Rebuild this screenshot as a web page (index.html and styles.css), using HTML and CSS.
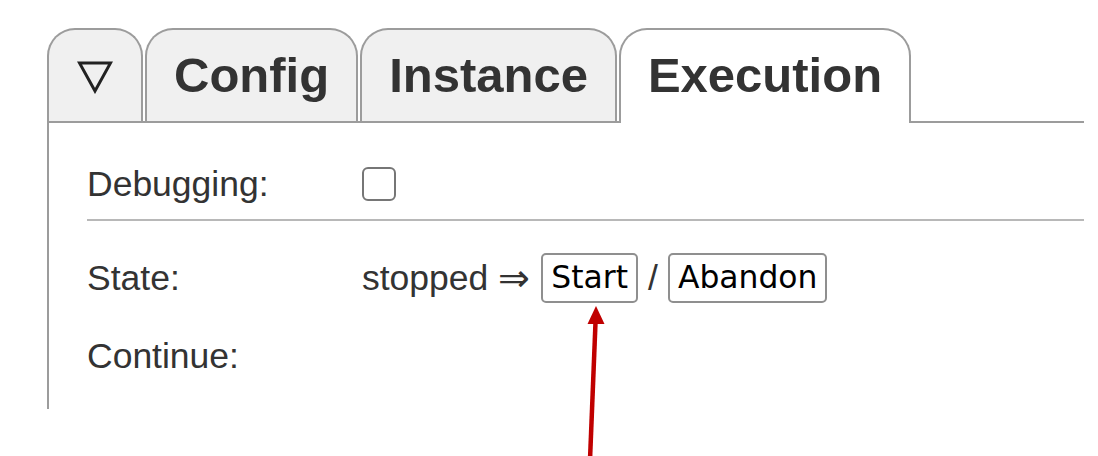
FILE: index.html
```html
<!DOCTYPE html>
<html>
<head>
<meta charset="utf-8">
<link rel="stylesheet" href="styles.css">
</head>
<body>
<div class="page">
  <div class="tabs">
    <div class="tab tab-menu">
      <svg class="tri" width="36" height="34" viewBox="0 0 36 34"><polygon points="2.5,3 33.5,3 18,31" fill="none" stroke="#222" stroke-width="3" stroke-linejoin="miter"/></svg>
    </div>
    <div class="tab">Config</div>
    <div class="tab">Instance</div>
    <div class="tab active">Execution</div>
  </div>
  <div class="panel">
    <div class="row row-debug">
      <div class="label">Debugging:</div>
      <div class="value"><input type="checkbox" class="check"></div>
    </div>
    <div class="sep"></div>
    <div class="row row-state">
      <div class="label">State:</div>
      <div class="value"><span>stopped</span><span class="implies">⇒</span><button class="btn">Start</button><span class="slash">/</span><button class="btn">Abandon</button></div>
    </div>
    <div class="row row-cont">
      <div class="label">Continue:</div>
      <div class="value"></div>
    </div>
  </div>
  <svg class="arrow" width="40" height="160" viewBox="0 0 40 160">
    <line x1="15.6" y1="20" x2="10" y2="160" stroke="#c00000" stroke-width="4.5"/>
    <polygon points="16,6 7.5,24 24.5,24" fill="#c00000"/>
  </svg>
</div>
</body>
</html>
```
FILE: styles.css
```css
html, body {
  margin: 0;
  padding: 0;
  background: #fff;
}
.page {
  position: relative;
  width: 1098px;
  height: 456px;
  padding: 28px 0 0 47px;
  box-sizing: border-box;
  font-family: "Liberation Sans", Arial, sans-serif;
  color: #333;
}
.tabs {
  display: flex;
  align-items: flex-start;
  gap: 2px;
  height: 93px;
  position: relative;
  z-index: 1;
}
.tab {
  box-sizing: border-box;
  height: 93px;
  border: 2px solid #9c9c9c;
  border-bottom: 0;
  border-radius: 28px 28px 0 0;
  background: #f0f0f0;
  display: flex;
  align-items: center;
  justify-content: center;
  padding: 0 27px 2px;
  font-weight: bold;
  font-size: 49px;
  color: #333;
}
.tab-menu {
  width: 96px;
  padding: 0;
}
.tri {
  display: block;
  margin-top: 2px;
}
.tab.active {
  background: #fff;
  height: 95px;
  padding-bottom: 4px;
}
.panel {
  box-sizing: border-box;
  width: 1037px;
  height: 288px;
  border-top: 2px solid #9c9c9c;
  border-left: 2px solid #9c9c9c;
  padding: 40px 0 0 38px;
  font-size: 35.5px;
}
.row {
  display: flex;
  align-items: center;
}
.label {
  width: 275px;
  flex: none;
}
.value {
  display: flex;
  align-items: center;
}
.row-debug {
  height: 42px;
}
.check {
  appearance: none;
  -webkit-appearance: none;
  margin: 0;
  width: 34px;
  height: 34px;
  box-sizing: border-box;
  border: 2px solid #767676;
  border-radius: 6px;
  background: #fff;
}
.sep {
  height: 2px;
  background: #b8b8b8;
  margin-top: 14px;
}
.row-state {
  margin-top: 32px;
  height: 50px;
}
.implies {
  font-size: 38px;
  margin: 0 11px 0 10px;
}
.slash {
  margin: 0 10px;
}
.btn {
  box-sizing: border-box;
  height: 50px;
  margin: 0;
  padding: 0 8px;
  border: 2px solid #8f8f8f;
  border-radius: 5px;
  background: #fff;
  color: #000;
  font-family: "DejaVu Sans", Verdana, sans-serif;
  font-size: 31.4px;
  line-height: 1;
}
.row-cont {
  margin-top: 32px;
  height: 42px;
}
.arrow {
  position: absolute;
  left: 580px;
  top: 300px;
}
```
